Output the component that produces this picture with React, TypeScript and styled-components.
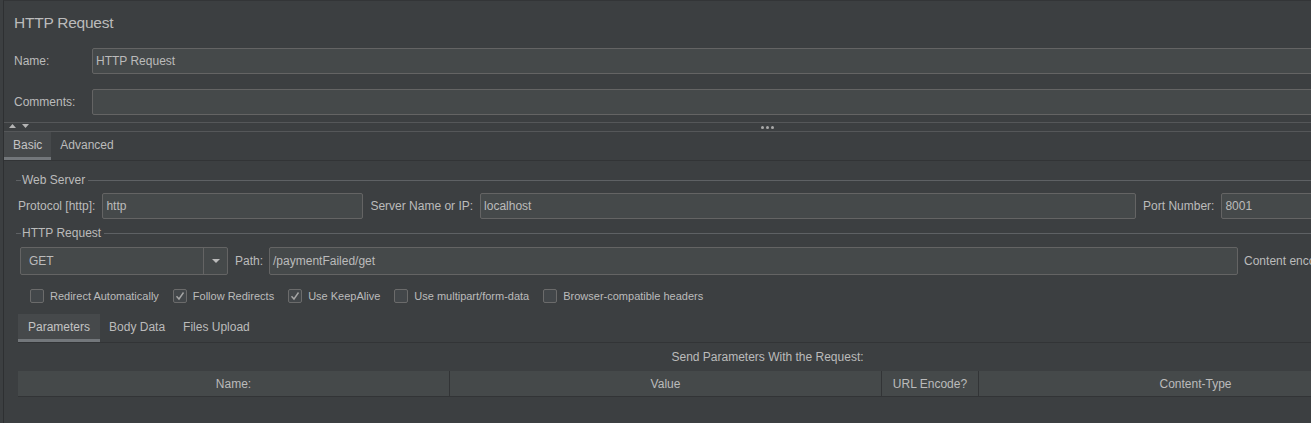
import React from "react";
import styled, { createGlobalStyle } from "styled-components";

const Global = createGlobalStyle`
  html, body {
    margin: 0;
    padding: 0;
    background: #3c3f41;
    overflow: hidden;
    width: 1311px;
    height: 423px;
  }
  body {
    font-family: "Liberation Sans", Arial, sans-serif;
    font-size: 12px;
    color: #bbbbbb;
  }
`;

const Page = styled.div`
  width: 1528px;
  height: 423px;
  margin-left: 3px;
  border-left: 1px solid #2e3032;
  border-top: 1px solid #333537;
  box-sizing: border-box;
  background: #3c3f41;
  display: flex;
  flex-direction: column;
`;

const Title = styled.div`
  font-size: 15.5px;
  letter-spacing: -0.25px;
  line-height: 22px;
  height: 22px;
  margin-top: 11px;
  padding-left: 10px;
  color: #bbbbbb;
`;

const Row = styled.div<{ $mt: number; $pl?: number }>`
  display: flex;
  align-items: center;
  margin-top: ${(p) => p.$mt}px;
  padding-left: ${(p) => p.$pl ?? 0}px;
`;

const Label = styled.span<{ $w?: number; $gap?: number; $lead?: number }>`
  flex: none;
  white-space: nowrap;
  ${(p) => (p.$w ? `width: ${p.$w}px;` : "")}
  margin-right: ${(p) => p.$gap ?? 0}px;
  margin-left: ${(p) => p.$lead ?? 0}px;
`;

const Field = styled.div<{ $w?: number; $h?: number }>`
  box-sizing: border-box;
  height: ${(p) => p.$h ?? 26}px;
  ${(p) => (p.$w ? `width: ${p.$w}px; flex: none;` : "flex: 1;")}
  background: #45494a;
  border: 1px solid #646464;
  border-radius: 2px;
  padding-left: 3px;
  display: flex;
  align-items: center;
  color: #bbbbbb;
  white-space: nowrap;
  overflow: hidden;
`;

const Splitter = styled.div`
  margin-top: 7px;
  height: 8px;
  border-top: 1px solid #555759;
  border-bottom: 1px solid #555759;
  display: flex;
  align-items: center;
  position: relative;
`;

const Arrows = styled.div`
  display: flex;
  gap: 6px;
  padding-left: 5px;
  position: absolute;
  left: 0;
  top: 1px;
`;

const Dots = styled.div`
  margin: 0 auto;
  display: flex;
  gap: 2px;
  span {
    width: 3px;
    height: 3px;
    border-radius: 50%;
    background: #a9a9a9;
  }
`;

const TabBar = styled.div<{ $mt?: number }>`
  display: flex;
  height: 29px;
  box-sizing: border-box;
  margin-top: ${(p) => p.$mt ?? 0}px;
  border-bottom: 1px solid #323436;
`;

const Tab = styled.div<{ $active?: boolean; $px?: number }>`
  box-sizing: border-box;
  height: 28px;
  padding: 0 ${(p) => p.$px ?? 9}px;
  display: flex;
  align-items: center;
  background: ${(p) => (p.$active ? "#46494b" : "transparent")};
  border-bottom: 3px solid ${(p) => (p.$active ? "#73777b" : "transparent")};
  color: ${(p) => (p.$active ? "#c4c4c4" : "#bbbbbb")};
`;

const Group = styled.div`
  padding: 0 14px;
  display: flex;
  flex-direction: column;
`;

const Legend = styled.div<{ $mt: number }>`
  display: flex;
  align-items: center;
  height: 14px;
  margin-top: ${(p) => p.$mt}px;
  &::before {
    content: "";
    width: 5px;
    height: 1px;
    background: #5e6164;
    margin-left: -2px;
    margin-right: 1px;
  }
  &::after {
    content: "";
    flex: 1;
    height: 1px;
    background: #5e6164;
    margin-left: 3px;
  }
`;

const Combo = styled.div`
  box-sizing: border-box;
  width: 208px;
  height: 28px;
  flex: none;
  background: #45494a;
  border: 1px solid #646464;
  border-radius: 2px;
  display: flex;
  align-items: stretch;
  margin-right: 7px;
`;

const ComboValue = styled.div`
  flex: 1;
  display: flex;
  align-items: center;
  padding-left: 8px;
`;

const ComboButton = styled.div`
  width: 23px;
  border-left: 1px solid #646464;
  display: flex;
  align-items: center;
  justify-content: center;
`;

const Checks = styled.div`
  display: flex;
  align-items: center;
  gap: 14px;
  margin-top: 14px;
  padding-left: 12px;
  height: 14px;
  font-size: 11px;
`;

const CheckItem = styled.label`
  display: flex;
  align-items: center;
  gap: 6px;
  white-space: nowrap;
`;

const Box = styled.span`
  box-sizing: border-box;
  width: 14px;
  height: 14px;
  border: 1px solid #6b6b6b;
  border-radius: 2px;
  background: #43474a;
  display: flex;
  align-items: center;
  justify-content: center;
`;

const Caption = styled.div`
  margin-top: 7px;
  line-height: 15px;
  height: 15px;
  text-align: center;
`;

const TableHead = styled.div`
  margin-top: 6px;
  display: grid;
  grid-template-columns: 431px 432px 97px 434px;
  width: max-content;
  height: 26px;
  box-sizing: border-box;
  background: #45494a;
  border-bottom: 1px solid #323436;
`;

const HeadCell = styled.div<{ $first?: boolean }>`
  display: flex;
  align-items: center;
  justify-content: center;
  border-left: ${(p) => (p.$first ? "none" : "1px solid #323436")};
  white-space: nowrap;
`;

const Check = ({ label, checked }: { label: string; checked?: boolean }) => (
  <CheckItem>
    <Box>
      {checked && (
        <svg width="10" height="10" viewBox="0 0 10 10">
          <polyline points="1.5,5.2 4,8 8.5,1.5" fill="none" stroke="#a6a6a6" strokeWidth="1.4" />
        </svg>
      )}
    </Box>
    {label}
  </CheckItem>
);

export default function App() {
  return (
    <>
      <Global />
      <Page>
        <Title>HTTP Request</Title>
        <Row $mt={14} $pl={10}>
          <Label $w={78}>Name:</Label>
          <Field>HTTP Request</Field>
        </Row>
        <Row $mt={15} $pl={10}>
          <Label $w={78}>Comments:</Label>
          <Field />
        </Row>
        <Splitter>
          <Arrows>
            <svg width="7" height="4" viewBox="0 0 7 4">
              <polygon points="0,4 3.5,0 7,4" fill="#b4b4b4" />
            </svg>
            <svg width="7" height="4" viewBox="0 0 7 4">
              <polygon points="0,0 7,0 3.5,4" fill="#b4b4b4" />
            </svg>
          </Arrows>
          <Dots>
            <span />
            <span />
            <span />
          </Dots>
        </Splitter>
        <TabBar>
          <Tab $active>Basic</Tab>
          <Tab>Advanced</Tab>
        </TabBar>
        <Group>
          <Legend $mt={12}>Web Server</Legend>
          <Row $mt={6}>
            <Label $gap={7}>Protocol [http]:</Label>
            <Field $w={261}>http</Field>
            <Label $gap={7} $lead={7}>Server Name or IP:</Label>
            <Field $w={656}>localhost</Field>
            <Label $gap={7} $lead={7}>Port Number:</Label>
            <Field>8001</Field>
          </Row>
          <Legend $mt={7}>HTTP Request</Legend>
          <Row $mt={7} $pl={2}>
            <Combo>
              <ComboValue>GET</ComboValue>
              <ComboButton>
                <svg width="8" height="4" viewBox="0 0 8 4">
                  <polygon points="0,0 8,0 4,4" fill="#bbbbbb" />
                </svg>
              </ComboButton>
            </Combo>
            <Label $gap={6}>Path:</Label>
            <Field $w={969} $h={28}>/paymentFailed/get</Field>
            <Label $lead={6}>Content encoding:</Label>
          </Row>
          <Checks>
            <Check label="Redirect Automatically" />
            <Check label="Follow Redirects" checked />
            <Check label="Use KeepAlive" checked />
            <Check label="Use multipart/form-data" />
            <Check label="Browser-compatible headers" />
          </Checks>
          <TabBar $mt={11}>
            <Tab $active $px={10}>Parameters</Tab>
            <Tab>Body Data</Tab>
            <Tab>Files Upload</Tab>
          </TabBar>
          <Caption>Send Parameters With the Request:</Caption>
          <TableHead>
            <HeadCell $first>Name:</HeadCell>
            <HeadCell>Value</HeadCell>
            <HeadCell>URL Encode?</HeadCell>
            <HeadCell>Content-Type</HeadCell>
          </TableHead>
        </Group>
      </Page>
    </>
  );
}
